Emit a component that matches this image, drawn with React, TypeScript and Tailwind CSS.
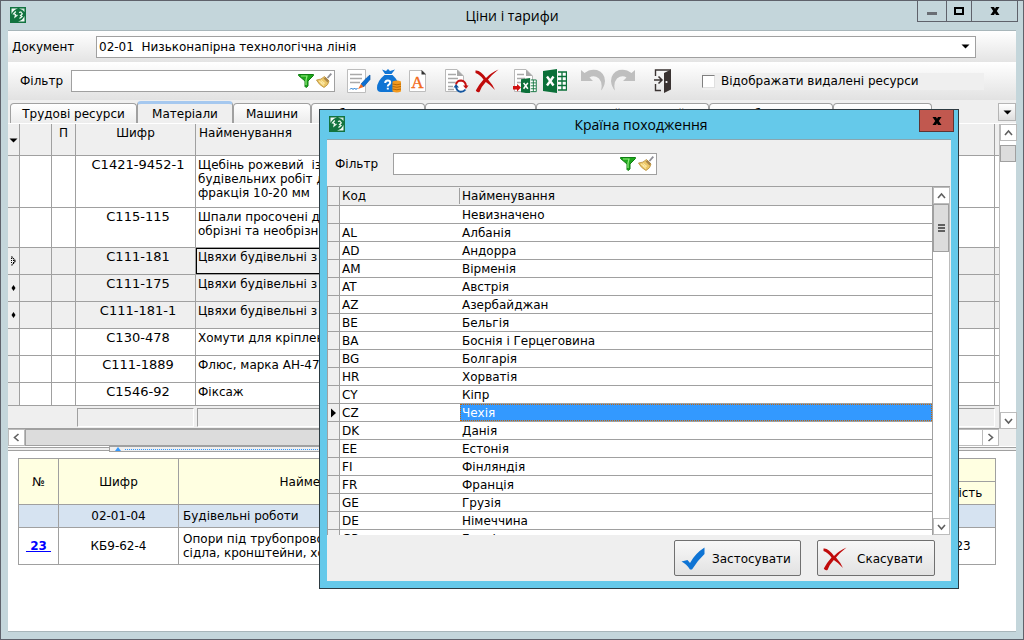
import type { ReactNode } from 'react';

type Resource = {
  mark: string;
  code: string;
  lines: string[];
  height: string;
  shaded?: boolean;
  current?: boolean;
};

const resources: Resource[] = [
  {
    mark: '',
    code: 'С1421-9452-1',
    lines: ['Щебінь рожевий  із', 'будівельних робіт для', 'фракція 10-20 мм'],
    height: 'h-[52px]',
  },
  {
    mark: '',
    code: 'С115-115',
    lines: ['Шпали просочені для', 'обрізні та необрізні'],
    height: 'h-[40px]',
  },
  { mark: 'current', code: 'С111-181', lines: ['Цвяхи будівельні з'], height: 'h-[27px]', shaded: true, current: true },
  { mark: 'dot', code: 'С111-175', lines: ['Цвяхи будівельні з'], height: 'h-[27px]', shaded: true },
  { mark: 'dot', code: 'С111-181-1', lines: ['Цвяхи будівельні з'], height: 'h-[27px]', shaded: true },
  { mark: '', code: 'С130-478', lines: ['Хомути для кріплення'], height: 'h-[27px]' },
  { mark: '', code: 'С111-1889', lines: ['Флюс, марка АН-47'], height: 'h-[27px]' },
  { mark: '', code: 'С1546-92', lines: ['Фіксаж'], height: 'h-[23px]' },
];

const countries: [string, string][] = [
  ['', 'Невизначено'],
  ['AL', 'Албанія'],
  ['AD', 'Андорра'],
  ['AM', 'Вірменія'],
  ['AT', 'Австрія'],
  ['AZ', 'Азербайджан'],
  ['BE', 'Бельгія'],
  ['BA', 'Боснія і Герцеговина'],
  ['BG', 'Болгарія'],
  ['HR', 'Хорватія'],
  ['CY', 'Кіпр'],
  ['CZ', 'Чехія'],
  ['DK', 'Данія'],
  ['EE', 'Естонія'],
  ['FI', 'Фінляндія'],
  ['FR', 'Франція'],
  ['GE', 'Грузія'],
  ['DE', 'Німеччина'],
  ['GR', 'Греція'],
];

const tabs: { label: string; width: string; active?: boolean }[] = [
  { label: 'Трудові ресурси', width: 'w-[127px]' },
  { label: 'Матеріали', width: 'w-[96px]', active: true },
  { label: 'Машини', width: 'w-[78px]' },
  { label: 'Обладнання', width: 'w-[114px]' },
  { label: 'Перевезення', width: 'w-[111px]' },
  { label: 'Плановий поточний', width: 'w-[173px]' },
  { label: 'Субпідряд', width: 'w-[124px]' },
  { label: 'Додаткові', width: 'w-[99px]' },
];

function AppIcon() {
  return (
    <svg viewBox="0 0 16 16" className="size-4 shrink-0" aria-hidden="true">
      <rect width="16" height="16" fill="#12733f" />
      <path d="M1.500 1.500H8Q3.500 2.500 1.500 7Z" fill="#f4faf6" />
      <path d="M14.500 14.500H8Q12.500 13.500 14.500 9Z" fill="#f4faf6" />
      <path d="M9 1.500H14.500V5Q13 2.500 9 1.500Z" fill="#cfe5d8" />
      <path d="M5.800 4.500L3.500 7L5.500 7.500L5 10L7.500 8M9 5.500L10.800 5L12.300 7L10.500 8.500L12 9.500L9.500 11.500" fill="none" stroke="#eefaf1" strokeWidth="1.200" />
    </svg>
  );
}

function Funnel() {
  return (
    <svg viewBox="0 0 16 16" className="size-4" aria-hidden="true">
      <path d="M0.500 1.500H15.500V2.500L10 8V13L8 14.500L7 13.500V8L0.500 2.500Z" fill="#1fa81b" stroke="#0f7d12" />
      <path d="M3 3H9L8 7V12" fill="none" stroke="#8fe97c" strokeWidth="1.200" />
    </svg>
  );
}

function Broom() {
  return (
    <svg viewBox="0 0 16 16" className="size-4" aria-hidden="true">
      <path d="M15.300 0.700L11.500 5" stroke="#8f8f96" strokeWidth="1.800" />
      <path d="M8.500 3.500L13 8Q12.500 12 8 14.500Q3 12 0.500 7Q5 7 8.500 3.500Z" fill="#ecc768" stroke="#b58a36" strokeWidth="0.800" />
      <path d="M9.500 4L13 7.500L11.500 9.500L7.500 5.500Z" fill="#a98648" />
      <path d="M3 8L8 11M5 7.500L9 10.500M4.500 9.500L8 12.500" stroke="#fff0b3" strokeWidth="0.900" />
    </svg>
  );
}

function FilterBox({ id, width }: { id: string; width: string }) {
  return (
    <div className={`flex h-[22px] items-center border border-[#a0a0a0] bg-white ${width}`}>
      <input id={id} type="text" className="h-full min-w-0 flex-1 px-1 outline-none" />
      <button type="button" aria-label="Застосувати фільтр" className="shrink-0">
        <Funnel />
      </button>
      <button type="button" aria-label="Очистити фільтр" className="mr-0.5 ml-0.5 shrink-0">
        <Broom />
      </button>
    </div>
  );
}

function Page() {
  return (
    <>
      <path d="M1.500 0.500H13L19.500 7V22.500H1.500Z" fill="#fff" stroke="#b9b9b9" />
      <path d="M13 0.500V7H19.500Z" fill="#a9a9a9" />
    </>
  );
}

function EditIcon() {
  return (
    <svg viewBox="0 0 24 24" className="size-6" aria-hidden="true">
      <path d="M0.500 0.500H18.500V23.500H0.500Z" fill="#fff" stroke="#bdbdbd" />
      <path d="M3 5.500H15M3 9.500H15M3 13.500H13" stroke="#a9a9a9" strokeWidth="1.600" />
      <path d="M3 20.500L4.500 19L6 20.500L7.500 19L9 20.500L10.500 19" fill="none" stroke="#0b70d0" />
      <path d="M23 6L19.500 9L14 15L16.500 18L23 10.500Z" fill="#0d6fd1" stroke="#0b57a8" strokeWidth="0.700" />
      <path d="M14 15L11 20L16.500 18Z" fill="#f36b21" />
    </svg>
  );
}

function MoneyIcon() {
  return (
    <svg viewBox="0 0 24 24" className="size-6" aria-hidden="true">
      <path d="M5 0.500L9 2L11 0L13 2L18 0.500L14.500 5H8Z" fill="#0f74d4" />
      <path d="M7.500 6H15.500Q22 12 22 18Q22 23 18 23H4Q0 23 0 19Q0 12 7.500 6Z" fill="#0f74d4" />
      <path d="M8.200 14Q8.200 11.400 10.800 11.400Q13.200 11.400 13.200 13.600Q13.200 15 11.600 15.800Q10.800 16.200 10.800 17.600M10.800 18.800V20.600" fill="none" stroke="#fff" strokeWidth="2" />
      <path d="M15.500 12.500Q20 10.500 24 12.500V22.500Q20 24.500 15.500 22.500Z" fill="#f39a1f" />
      <path d="M15.500 15Q20 16.500 24 15M15.500 17.500Q20 19 24 17.500M15.500 20Q20 21.500 24 20" fill="none" stroke="#b66708" />
    </svg>
  );
}

function FontIcon() {
  return (
    <svg viewBox="0 0 24 24" className="size-6" aria-hidden="true">
      <path d="M2.500 1.500H15L18.500 5V22.500H2.500Z" fill="#fff" stroke="#bdbdbd" />
      <path d="M14.500 1V5.500H19Z" fill="#333" />
      <text x="10.500" y="18.500" textAnchor="middle" fontFamily="Liberation Serif, serif" fontSize="17" fill="#f26a1b" stroke="#f26a1b" strokeWidth="0.400">
        A
      </text>
    </svg>
  );
}

function RefreshIcon() {
  return (
    <svg viewBox="0 0 24 24" className="size-6" aria-hidden="true">
      <g transform="translate(-1 0)">
        <Page />
      </g>
      <path d="M3 5.500H11M3 9.500H13M3 13.500H11M3 17.500H8M3 20.500H9" stroke="#a9a9a9" strokeWidth="1.600" />
      <circle cx="16" cy="17" r="6.500" fill="#fff" />
      <path d="M11 15.500Q12 11.500 16 11.500Q20.500 12 21 17" fill="none" stroke="#c41212" strokeWidth="2" />
      <path d="M18 16.500H23.500L21 20Z" fill="#c41212" />
      <path d="M20.500 20.500Q18.500 23 15.500 22.800Q11.500 22 11 17.500" fill="none" stroke="#14559e" strokeWidth="2" />
      <path d="M8.500 18.500H14L11 15Z" fill="#14559e" />
    </svg>
  );
}

function CrossIcon() {
  return (
    <svg viewBox="0 0 24 24" className="size-6" aria-hidden="true">
      <path d="M0.500 1.500Q5 0.500 11 9Q16 3.500 23.500 0.500Q17 5.500 13 10.500Q18 16 20 21Q15 15.500 10.800 13Q6 18 4.500 23Q2 24 0.800 21.500Q4 15.500 8.500 10.500Q5 5.500 0.500 4Z" fill="#c00b0b" />
    </svg>
  );
}

function CheckIcon() {
  return (
    <svg viewBox="0 0 24 24" className="size-6" aria-hidden="true">
      <path d="M0.500 14.500L6.500 13L9 16Q14 6.500 23.500 0.500V7Q16 14 11 22.500H9Q5.500 17 0.500 14.500Z" fill="#0f74d4" />
    </svg>
  );
}

function SheetMark() {
  return (
    <>
      <path d="M0 2L14 0V24L0 22Z" fill="#0b7039" />
      <path d="M4 7.500L10.500 16.500M10.500 7.500L4 16.500" stroke="#fff" strokeWidth="2.400" />
      <path d="M15 3H23.500V21H15" fill="#fff" stroke="#0b7039" strokeWidth="1.400" />
      <path d="M15 7.500H23M15 12H23M15 16.500H23M19 3V21" stroke="#0b7039" strokeWidth="1.300" />
    </>
  );
}

function ExcelIcon() {
  return (
    <svg viewBox="0 0 24 24" className="size-6" aria-hidden="true">
      <SheetMark />
    </svg>
  );
}

function ImportIcon() {
  return (
    <svg viewBox="0 0 24 24" className="size-6" aria-hidden="true">
      <Page />
      <path d="M4 5.500H11M4 9.500H12M4 13.500H8" stroke="#a9a9a9" strokeWidth="1.600" />
      <g transform="translate(8 9) scale(0.65)">
        <SheetMark />
      </g>
      <path d="M0 17H4V15L8 18.500L4 22.500V20.500H0Z" fill="#d01010" />
    </svg>
  );
}

function UndoIcon({ flip = false }: { flip?: boolean }) {
  return (
    <svg viewBox="0 0 24 24" className={flip ? 'size-6 -scale-x-100' : 'size-6'} aria-hidden="true">
      <path d="M0 1L3.500 4Q9 -0.500 16 1Q24 4 24 12Q23.500 18 20 21.500Q22 14 18 9.500Q13 5.500 8.500 8.500L12 12H0Z" fill="#bfbfbf" />
    </svg>
  );
}

function ExitIcon() {
  return (
    <svg viewBox="0 0 24 24" className="size-6" aria-hidden="true">
      <path d="M6.500 7V1H22M6.500 15V21.500H12" fill="none" stroke="#3a3332" strokeWidth="1.400" />
      <path d="M15 4L22 0.500V20.500L15 24Z" fill="#3a3332" />
      <circle cx="17.500" cy="13" r="1.100" fill="#fff" />
      <path d="M5 11H12.500M9.500 7.500L13 11L9.500 14.500" fill="none" stroke="#3a3332" strokeWidth="1.500" />
    </svg>
  );
}

function ToolButton({ label, children }: { label: string; children: ReactNode }) {
  return (
    <button type="button" aria-label={label} className="size-6 shrink-0">
      {children}
    </button>
  );
}

function Chevron({ dir }: { dir: 'up' | 'down' | 'left' | 'right' }) {
  const paths = { up: 'M1 7L4.500 3L8 7', down: 'M1 3L4.500 7L8 3', left: 'M6.500 1L2.500 4.500L6.500 8', right: 'M2.500 1L6.500 4.500L2.500 8' };
  return (
    <svg viewBox="0 0 9 9" className="size-[9px]" aria-hidden="true">
      <path d={paths[dir]} fill="none" stroke="#606060" strokeWidth="1.600" />
    </svg>
  );
}

function ScrollButton({ dir }: { dir: 'up' | 'down' | 'left' | 'right' }) {
  return (
    <button type="button" aria-label="Прокрутити" className="flex size-[17px] shrink-0 items-center justify-center border border-[#bcbcbc] bg-white">
      <Chevron dir={dir} />
    </button>
  );
}

function DownTriangle() {
  return (
    <svg viewBox="0 0 9 5" className="h-[5px] w-[9px]" aria-hidden="true">
      <path d="M0.500 0.500H8.500L4.500 4.500Z" fill="#000" />
    </svg>
  );
}

function BoldCross() {
  return (
    <svg viewBox="0 0 10 8" className="h-2 w-[10px]" aria-hidden="true">
      <path d="M0.500 0H4L5 1.800L6 0H9.500L6.800 4L9.500 8H6L5 6.200L4 8H0.500L3.200 4Z" fill="#000" />
    </svg>
  );
}

function Mark({ kind }: { kind: string }) {
  if (kind === 'dot') {
    return (
      <svg viewBox="0 0 12 12" className="size-3" aria-hidden="true">
        <path d="M5.500 3L7.500 6L5.500 9L3.500 6Z" fill="#000" />
      </svg>
    );
  }
  if (kind === 'current') {
    return (
      <svg viewBox="0 0 12 12" className="size-3" aria-hidden="true">
        <path d="M3.500 1.500L7.500 6L3.500 10.500" fill="none" stroke="#000" strokeWidth="1.200" strokeDasharray="1.500 0.600" />
        <path d="M3.500 3V9M5.500 5V8" stroke="#000" strokeDasharray="1 1" />
      </svg>
    );
  }
  return null;
}

function ResourceGrid() {
  const head = 'border-b border-[#a0a0a0] pt-0.5 align-top font-normal';
  const cell = 'border-r border-b border-[#a0a0a0] align-top';
  return (
    <div className="flex border-t border-white">
      <div className="flex min-w-0 flex-1 flex-col">
        <table className="w-full table-fixed border-separate border-spacing-0 leading-[14px]">
          <colgroup>
            <col className="w-3" />
            <col className="w-8" />
            <col className="w-6" />
            <col className="w-[120px]" />
            <col />
            <col className="w-1" />
          </colgroup>
          <thead className="bg-[#efefef]">
            <tr className="h-8">
              <th className={`${head} border-r`} aria-label="Меню">
                <span className="flex h-7 items-center justify-center">
                  <DownTriangle />
                </span>
              </th>
              <th className={`${head} border-r`} />
              <th className={`${head} border-r`}>П</th>
              <th className={`${head} border-r`}>Шифр</th>
              <th className={`${head} border-r pl-[3px] text-left`}>Найменування</th>
              <th className={head} />
            </tr>
          </thead>
          <tbody>
            {resources.map((r) => (
              <tr key={r.code} className={`${r.height} ${r.shaded ? 'bg-[#efefef]' : 'bg-white'}`}>
                <td className="border-r border-b border-[#a0a0a0] bg-[#efefef] align-middle">
                  <Mark kind={r.mark} />
                </td>
                <td className={cell} />
                <td className={cell} />
                <td className={`${cell} pt-0.5 pl-[5px] text-center text-[13px]`}>{r.code}</td>
                <td className={`${cell} p-0`}>
                  <div
                    className={`overflow-hidden whitespace-pre ${
                      r.current ? 'h-[26px] w-3/5 border border-black pt-px pl-px' : 'pt-0.5 pl-0.5'
                    }`}
                  >
                    {r.lines.join('\n')}
                  </div>
                </td>
                <td className="border-b border-[#a0a0a0]" />
              </tr>
            ))}
          </tbody>
        </table>
        <div className="flex h-[23px] gap-[3px] border-b border-[#a0a0a0] bg-[#efefef] pt-0.5 pr-1 pb-px pl-[69px]">
          <div className="w-[117px] border border-[#a0a0a0] border-r-white border-b-white" />
          <div className="flex-1 border border-[#a0a0a0] border-r-white border-b-white" />
        </div>
        <div className="flex h-[17px] bg-white">
          <ScrollButton dir="left" />
          <div className="h-full w-5/6 border border-[#a0a0a0] bg-[#dcdcdc]" />
          <div className="flex-1 border-y border-[#bcbcbc]" />
          <ScrollButton dir="right" />
        </div>
      </div>
      <div className="flex w-[17px] shrink-0 flex-col bg-[#efefef] pb-[17px]">
        <div className="flex flex-1 flex-col border-l border-[#bcbcbc] bg-white">
          <ScrollButton dir="up" />
          <div className="mt-1 h-[17px] border border-[#a0a0a0] bg-[#dcdcdc]" />
          <div className="flex-1" />
          <ScrollButton dir="down" />
        </div>
      </div>
    </div>
  );
}

function Splitter() {
  return (
    <div className="flex h-2 items-start bg-white">
      <div className="mt-px h-1 w-[101px] border-y border-[#a0a0a0] bg-[#efefef]" />
      <div className="flex h-[6px] w-4/5 items-center border border-[#a0a0a0] bg-[#efefef] pl-[5px]">
        <svg viewBox="0 0 6 4" className="h-1 w-[6px]" aria-hidden="true">
          <path d="M3 0L6 4H0Z" fill="#3399ff" />
        </svg>
        <div className="ml-1 flex-1 border-t border-dotted border-[#3399ff]" />
      </div>
      <div className="mt-px h-1 flex-1 border-y border-[#a0a0a0] bg-[#efefef]" />
    </div>
  );
}

function WorksTable() {
  const cell = 'border border-[#a0a0a0]';
  return (
    <div className="min-h-0 flex-1 bg-white pt-1 pr-5 pl-[10px]">
      <table className="w-full table-fixed border-collapse leading-[14px]">
        <colgroup>
          <col className="w-10" />
          <col className="w-[120px]" />
          <col />
          <col className="w-[90px]" />
          <col className="w-[84px]" />
        </colgroup>
        <thead className="bg-[#ffffe1]">
          <tr className="h-[23px]">
            <th rowSpan={2} className={`${cell} font-normal`}>№</th>
            <th rowSpan={2} className={`${cell} font-normal`}>Шифр</th>
            <th rowSpan={2} className={`${cell} pr-[348px] font-normal`}>Найменування</th>
            <th rowSpan={2} className={`${cell} font-normal`}>Одиниця</th>
            <th className={cell} />
          </tr>
          <tr className="h-[23px]">
            <th className={`${cell} font-normal`}>Кількість</th>
          </tr>
        </thead>
        <tbody>
          <tr className="h-[23px] bg-[#d6e3f1]">
            <td className={cell} />
            <td className={`${cell} text-center`}>02-01-04</td>
            <td className={`${cell} pl-1`}>Будівельні роботи</td>
            <td className={cell} />
            <td className={cell} />
          </tr>
          <tr className="h-[37px]">
            <td className={`${cell} text-center`}>
              <a href="#23" className="font-bold whitespace-pre text-[#0000ff] underline">{' 23 '}</a>
            </td>
            <td className={`${cell} text-center`}>КБ9-62-4</td>
            <td className={`${cell} pl-1`}>
              Опори під трубопроводи,
              <br />
              сідла, кронштейни, хомути
            </td>
            <td className={`${cell} text-center`}>т</td>
            <td className={`${cell} text-center`}>0,123</td>
          </tr>
        </tbody>
      </table>
    </div>
  );
}

function CountryDialog() {
  const row = 'border-b border-[#a0a0a0]';
  return (
    <div
      role="dialog"
      aria-labelledby="dialog-title"
      className="absolute top-[108px] left-[318px] flex h-[480px] w-[640px] flex-col border border-[#2d3b42] bg-[#65c9ea] px-[7px] pb-[7px]"
    >
      <div className="flex h-[29px] items-start justify-between pl-[2px]">
        <span className="w-[34px] pt-[6px]">
          <AppIcon />
        </span>
        <h2 id="dialog-title" className="pt-[5px] font-['Open_Sans',sans-serif] text-[14px] leading-5">
          Країна походження
        </h2>
        <button type="button" aria-label="Закрити" className="-mr-[3px] flex h-[22px] w-[35px] items-center justify-center border border-t-0 border-[#5d3433] bg-[#c1584f]">
          <BoldCross />
        </button>
      </div>
      <div className="flex min-h-0 flex-1 flex-col border-t border-[#8aa5ae] bg-[#efefef]">
        <div className="flex items-center pt-[13px] pb-[11px] pl-2">
          <label htmlFor="country-filter" className="w-[58px]">
            Фільтр
          </label>
          <FilterBox id="country-filter" width="w-[264px]" />
        </div>
        <div className="mr-px flex h-[349px] overflow-hidden border-t border-l border-[#a0a0a0]">
          <table className="h-fit min-w-0 flex-1 table-fixed border-separate border-spacing-0 bg-white leading-4">
            <colgroup>
              <col className="w-3" />
              <col className="w-[120px]" />
              <col />
            </colgroup>
            <thead className="bg-[#efefef]">
              <tr className="h-[19px]">
                <th className={`${row} border-r`} />
                <th className={`${row} p-0 text-left font-normal`}>
                  <div className="border-r border-[#a0a0a0] pl-0.5">Код</div>
                </th>
                <th className={`${row} border-r pl-0.5 text-left font-normal`}>Найменування</th>
              </tr>
            </thead>
            <tbody>
              {countries.map(([code, name]) => {
                const selected = code === 'CZ';
                return (
                  <tr key={name} className="h-[18px]">
                    <td className={`${row} border-r bg-[#efefef]`}>
                      {selected && (
                        <svg viewBox="0 0 11 10" className="h-[10px] w-[11px]" aria-hidden="true">
                          <path d="M3 0.500L8 5L3 9.500Z" fill="#000" />
                        </svg>
                      )}
                    </td>
                    <td className={`${row} pl-0.5`}>{code}</td>
                    <td className={`${row} border-r p-0`}>
                      <div className={selected ? 'h-[17px] border border-dotted border-[#cc6600] bg-[#3399ff] pl-px leading-4 text-white' : 'pl-0.5'}>{name}</div>
                    </td>
                  </tr>
                );
              })}
            </tbody>
          </table>
          <div className="flex w-[17px] shrink-0 flex-col border-r border-[#bcbcbc] bg-white">
            <ScrollButton dir="up" />
            <div className="flex h-12 flex-col items-center justify-center gap-px border border-[#a0a0a0] bg-[#dcdcdc]">
              <span className="h-0.5 w-[7px] bg-[#606060]" />
              <span className="h-0.5 w-[7px] bg-[#606060]" />
              <span className="h-0.5 w-[7px] bg-[#606060]" />
            </div>
            <div className="flex-1" />
            <ScrollButton dir="down" />
          </div>
        </div>
        <div className="flex flex-1 items-start justify-end gap-4 pt-[5px] pr-4">
          <button type="button" className="flex h-[36px] w-[127px] items-center gap-[7px] rounded-[2px] border border-[#707070] bg-linear-to-b from-[#f8f8f8] to-[#e2e2e2] pt-0.5 pl-[6px]">
            <CheckIcon />
            Застосувати
          </button>
          <button type="button" className="flex h-[36px] w-[118px] items-center gap-[10px] rounded-[2px] border border-[#707070] bg-linear-to-b from-[#f8f8f8] to-[#e2e2e2] pt-0.5 pl-[5px]">
            <CrossIcon />
            Скасувати
          </button>
        </div>
      </div>
    </div>
  );
}

export default function App() {
  return (
    <div className="relative flex min-h-screen flex-col border border-[#5f626b] bg-[#c4d6db] px-[7px] pb-[7px] font-['DejaVu_Sans',sans-serif] text-[12px] text-black">
      <header className="flex h-[29px] items-start justify-between pl-[2px]">
        <span className="w-[97px] pt-[6px]">
          <AppIcon />
        </span>
        <h1 className="pt-[5px] font-['Open_Sans',sans-serif] text-[14px] leading-5">Ціни і тарифи</h1>
        <div className="-mr-0.5 flex h-[21px] border border-t-0 border-[#5f626b]">
          <button type="button" aria-label="Згорнути" className="flex w-7 items-center justify-center">
            <span className="mt-1 h-[3px] w-[10px] bg-[#6a6e74]" />
          </button>
          <button type="button" aria-label="Розгорнути" className="flex w-[26px] items-center justify-center border-x border-[#5f626b]">
            <span className="h-2 w-[10px] border-2 border-black" />
          </button>
          <button type="button" aria-label="Закрити" className="flex w-[45px] items-center justify-center">
            <BoldCross />
          </button>
        </div>
      </header>
      <main className="flex flex-1 flex-col border-y border-[#a8b6ba] bg-[#efefef]">
        <div className="flex h-[31px] items-center bg-linear-to-b from-white to-[#e4e4e4] pr-10 pl-1">
          <label htmlFor="document" className="w-[84px]">
            Документ
          </label>
          <div className="relative min-w-0 flex-1">
            <select id="document" className="block h-[22px] w-full appearance-none border border-[#a0a0a0] bg-white px-0.5 whitespace-pre outline-none">
              <option>{'02-01\u00a0 Низьконапірна технологічна лінія'}</option>
            </select>
            <span className="pointer-events-none absolute inset-y-0 right-[6px] flex items-center">
              <DownTriangle />
            </span>
          </div>
        </div>
        <div className="flex h-[38px] items-center bg-linear-to-b from-white to-[#e2e2e2] pl-3">
          <label htmlFor="filter" className="w-[51px]">
            Фільтр
          </label>
          <FilterBox id="filter" width="w-[264px]" />
          <div className="ml-3 flex gap-[14px]">
            <div className="flex gap-[6px]">
              <ToolButton label="Редагувати"><EditIcon /></ToolButton>
              <ToolButton label="Ціни"><MoneyIcon /></ToolButton>
              <ToolButton label="Шрифт"><FontIcon /></ToolButton>
            </div>
            <div className="flex gap-[6px]">
              <ToolButton label="Оновити"><RefreshIcon /></ToolButton>
              <ToolButton label="Видалити"><CrossIcon /></ToolButton>
            </div>
            <div className="flex gap-[6px]">
              <ToolButton label="Імпорт з Excel"><ImportIcon /></ToolButton>
              <ToolButton label="Експорт в Excel"><ExcelIcon /></ToolButton>
            </div>
            <div className="flex gap-[6px]">
              <ToolButton label="Скасувати дію"><UndoIcon /></ToolButton>
              <ToolButton label="Повторити дію"><UndoIcon flip /></ToolButton>
            </div>
            <ToolButton label="Вихід"><ExitIcon /></ToolButton>
          </div>
          <label className="ml-[29px] flex h-[17px] w-[282px] items-center gap-[6px] bg-[#efefef]">
            <input type="checkbox" className="size-[13px] appearance-none border border-[#e0e0e0] border-t-[#808080] border-l-[#808080] bg-white" />
            Відображати видалені ресурси
          </label>
        </div>
        <div className="flex h-[23px] items-end pl-0.5">
          <div role="tablist" className="flex min-w-0 flex-1 items-end">
            {tabs.map((t) => (
              <button
                key={t.label}
                type="button"
                role="tab"
                aria-selected={!!t.active}
                className={`shrink-0 rounded-t-[4px] border border-b-0 border-[#a0a0a0] leading-4 ${t.width} ${
                  t.active ? 'h-[22px] border-t-3 border-t-[#a5c8ef] bg-[#efefef]' : 'h-5 bg-linear-to-b from-white to-[#ececec]'
                }`}
              >
                {t.label}
              </button>
            ))}
          </div>
          <button type="button" aria-label="Усі вкладки" className="mb-[2px] flex size-[18px] items-center justify-center border border-[#b5b5b5] bg-linear-to-b from-white to-[#dedede]">
            <DownTriangle />
          </button>
        </div>
        <ResourceGrid />
        <Splitter />
        <WorksTable />
      </main>
      <CountryDialog />
    </div>
  );
}
